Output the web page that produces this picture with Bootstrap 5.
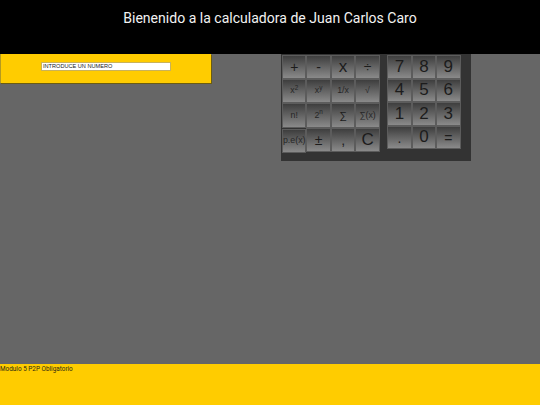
<!DOCTYPE html>
<html lang="es">
<head>
<meta charset="utf-8">
<title>Calculadora</title>
<link href="https://cdn.jsdelivr.net/npm/bootstrap@5.3.0/dist/css/bootstrap.min.css" rel="stylesheet">
<style>
html,body{height:100%;}
body{background:#666;font-family:Roboto,"Liberation Sans",sans-serif;}
.page-wrap{height:405px;overflow:hidden;}
.top-bar{height:54px;background:#000;color:#f2f2f2;font-size:14.05px;line-height:17px;padding-top:10px;}
.main-area{height:310px;background:#666;}
.entry-box{width:211px;height:29px;background:#fc0;box-shadow:1px 1px 0 #6b5c10;border-left:1px solid #b59a20;padding:8px 0 0 40px;}
.entry-input{display:block;width:130px;height:9px;background:#fff;border:1px solid #c9b25a;font-family:"Liberation Sans",sans-serif;font-size:5.6px;line-height:7px;color:#222;padding:0 1px;white-space:nowrap;}
.calc-panel{width:190px;height:107px;margin-left:70px;background:#333;padding:.5px 11px 0 1px;gap:7.5px;}
.key-grp{display:grid;}
.key-ops{grid-template-columns:repeat(4,24.45px);grid-template-rows:repeat(4,24.4px);}
.key-nums{grid-template-columns:repeat(3,24.45px);grid-template-rows:24px 23.6px 23.6px 23.4px;}
.key{display:flex;align-items:center;justify-content:center;background:linear-gradient(#3e3e3e,#8a8a8a);border:1px solid #5c5c5c;border-radius:0;color:#1c1c1c;font-family:"Liberation Sans",sans-serif;font-size:15.5px;line-height:1;padding:0 0 1px;}
.key sup{font-size:72%;top:-.4em;line-height:0;position:relative;vertical-align:baseline;}
.key-xs{font-size:8.8px;color:#262626;}
.key-sm{font-size:10.5px;}
.key-md{font-size:14px;padding:1px 0 0;}
.key-lg{font-size:17px;}
.key-low{transform:translateY(1px);}
.foot-bar{height:41px;background:#fc0;color:#2e2a10;font-size:6.4px;line-height:9px;padding-top:1px;}
</style>
</head>
<body>
<div class="page-wrap">
  <header class="top-bar text-center">Bienenido a la calculadora de Juan Carlos Caro</header>
  <main class="main-area d-flex align-items-start">
    <div class="entry-box flex-shrink-0"><div class="entry-input">INTRODUCE UN NUMERO</div></div>
    <div class="calc-panel d-flex flex-shrink-0">
      <div class="key-grp key-ops">
        <button class="key key-md">+</button>
        <button class="key key-md">-</button>
        <button class="key key-lg">x</button>
        <button class="key key-md">÷</button>
        <button class="key key-xs">x<sup>2</sup></button>
        <button class="key key-xs">x<sup>y</sup></button>
        <button class="key key-xs">1/x</button>
        <button class="key key-xs">√</button>
        <button class="key key-xs">n!</button>
        <button class="key key-xs">2<sup>n</sup></button>
        <button class="key key-sm">∑</button>
        <button class="key key-xs">∑(x)</button>
        <button class="key key-xs key-low">p.e(x)</button>
        <button class="key key-md">±</button>
        <button class="key key-md">,</button>
        <button class="key key-lg">C</button>
      </div>
      <div class="key-grp key-nums">
        <button class="key key-lg">7</button>
        <button class="key key-lg">8</button>
        <button class="key key-lg">9</button>
        <button class="key key-lg">4</button>
        <button class="key key-lg">5</button>
        <button class="key key-lg">6</button>
        <button class="key key-lg">1</button>
        <button class="key key-lg">2</button>
        <button class="key key-lg">3</button>
        <button class="key key-md">.</button>
        <button class="key key-lg">0</button>
        <button class="key key-md">=</button>
      </div>
    </div>
  </main>
  <footer class="foot-bar">Modulo 5 P2P Obligatorio</footer>
</div>
<script src="https://cdn.jsdelivr.net/npm/bootstrap@5.3.0/dist/js/bootstrap.bundle.min.js"></script>
</body>
</html>
